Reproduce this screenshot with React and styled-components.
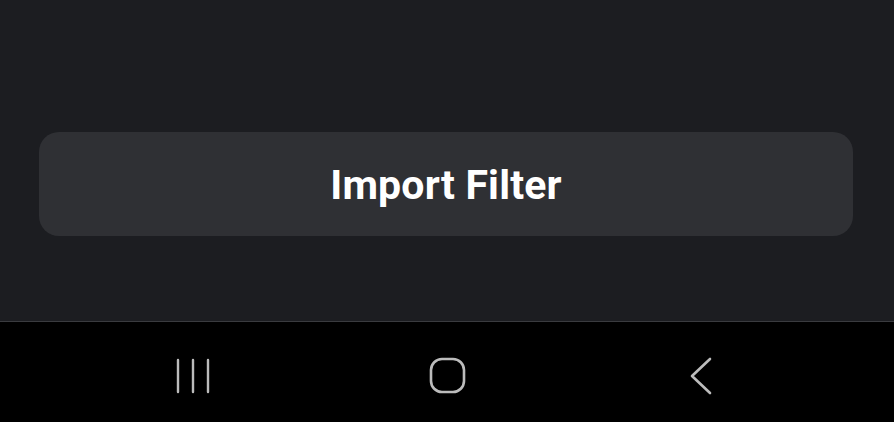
import React from "react";
import styled, { createGlobalStyle } from "styled-components";

const Global = createGlobalStyle`
  html, body { margin: 0; padding: 0; background: #000; }
  #root { height: 422px; }
`;

const Screen = styled.div`
  width: 894px;
  height: 422px;
  display: flex;
  flex-direction: column;
  font-family: Roboto, "Liberation Sans", sans-serif;
`;

const Content = styled.div`
  height: 321px;
  background: #1c1d21;
  box-sizing: border-box;
  padding: 132px 41px 0 39px;
`;

const ActionButton = styled.button`
  width: 100%;
  height: 104px;
  border: none;
  border-radius: 20px;
  background: #2f3034;
  color: #ffffff;
  font-family: Roboto, "Liberation Sans", sans-serif;
  font-weight: 700;
  font-size: 41px;
  letter-spacing: 0.2px;
  padding: 2px 0 0 0;
  display: flex;
  align-items: center;
  justify-content: center;
`;

const NavBar = styled.nav`
  flex: 1;
  background: #000;
  border-top: 1px solid #3a3b3f;
  display: flex;
  justify-content: center;
  align-items: center;
  padding-top: 7px;
  box-sizing: border-box;
`;

const NavSlot = styled.div`
  width: 254px;
  display: flex;
  justify-content: center;
  align-items: center;
`;

const stroke = "#bcbcbc";

export default function App() {
  return (
    <>
      <Global />
      <Screen>
        <Content>
          <ActionButton>Import Filter</ActionButton>
        </Content>
        <NavBar>
          <NavSlot>
            <svg width="34" height="36" viewBox="0 0 34 36">
              <g stroke={stroke} strokeWidth="2.4" strokeLinecap="round">
                <line x1="2" y1="2" x2="2" y2="34" />
                <line x1="17" y1="2" x2="17" y2="34" />
                <line x1="32" y1="2" x2="32" y2="34" />
              </g>
            </svg>
          </NavSlot>
          <NavSlot>
            <svg width="37" height="37" viewBox="0 0 37 37">
              <rect x="2" y="2" width="33" height="33" rx="11" ry="11" fill="none" stroke={stroke} strokeWidth="2.6" />
            </svg>
          </NavSlot>
          <NavSlot>
            <svg width="24" height="38" viewBox="0 0 24 38">
              <polyline points="21,2 3,19 21,36" fill="none" stroke={stroke} strokeWidth="2.6" strokeLinecap="round" strokeLinejoin="round" />
            </svg>
          </NavSlot>
        </NavBar>
      </Screen>
    </>
  );
}
